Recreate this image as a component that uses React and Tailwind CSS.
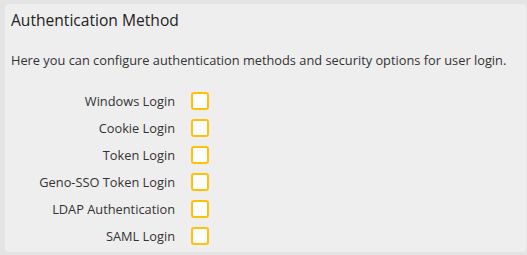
const methods = [
  'Windows Login',
  'Cookie Login',
  'Token Login',
  'Geno-SSO Token Login',
  'LDAP Authentication',
  'SAML Login',
];

export default function App() {
  return (
    <div
      className="h-[255px] w-[527px] bg-[#e4e4e4] pl-[5px] pr-px pt-[4px] pb-[3px]"
      style={{ fontFamily: '"Open Sans", sans-serif' }}
    >
      <section className="flex h-full flex-col rounded-[4px] bg-[#eeeeee] px-[6px] pt-[5px]">
        <h2 className="text-[15.6px] leading-[22px] text-[#222222]">Authentication Method</h2>
        <p className="mt-[20px] text-[12.8px] leading-[18px] text-[#333333]">
          Here you can configure authentication methods and security options for user login.
        </p>
        <div className="mt-[23px] flex flex-col gap-[9px]">
          {methods.map((name) => (
            <div key={name} className="flex items-center">
              <span className="w-[164px] text-right text-[12.8px] leading-[18px] text-[#333333]">
                {name}
              </span>
              <span className="ml-[16px] h-[18px] w-[18px] rounded-[3px] border-2 border-[#ffc107] bg-white" />
            </div>
          ))}
        </div>
      </section>
    </div>
  );
}
